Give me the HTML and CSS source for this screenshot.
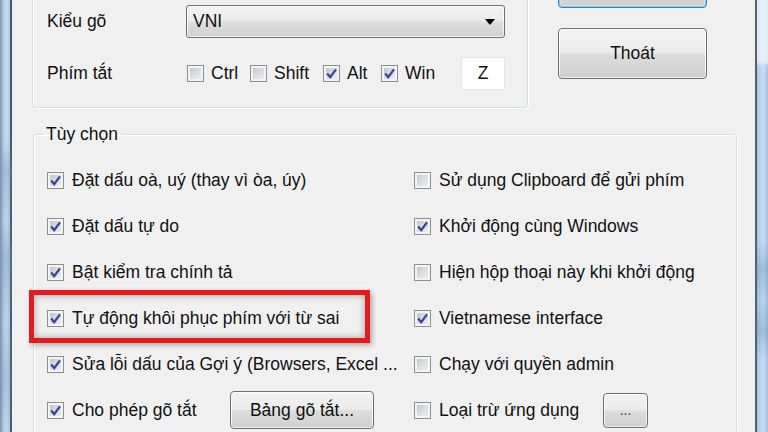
FILE: index.html
```html
<!DOCTYPE html>
<html lang="vi">
<head>
<meta charset="utf-8">
<title>UniKey</title>
<link rel="stylesheet" href="styles.css">
</head>
<body>
<div class="window">
  <div class="frame-left"></div>
  <div class="client">
    <div class="top">
      <div class="group main-group">
        <div class="field-row">
          <span class="field-label">Kiểu gõ</span>
          <div class="combo"><span class="combo-text">VNI</span><span class="combo-arrow"></span></div>
        </div>
        <div class="field-row hotkey-row">
          <span class="field-label">Phím tắt</span>
          <label class="check hk hk-ctrl"><span class="box"></span><span class="txt">Ctrl</span></label>
          <label class="check hk hk-shift"><span class="box"></span><span class="txt">Shift</span></label>
          <label class="check hk hk-alt"><span class="box on"><svg viewBox="0 0 15 15"><path d="M3.2 7.6 L6.2 11.2 L12 3.4" /></svg></span><span class="txt">Alt</span></label>
          <label class="check hk hk-win"><span class="box on"><svg viewBox="0 0 15 15"><path d="M3.2 7.6 L6.2 11.2 L12 3.4" /></svg></span><span class="txt">Win</span></label>
          <div class="keybox">Z</div>
        </div>
      </div>
      <div class="actions">
        <button class="btn btn-default" type="button"></button>
        <button class="btn" type="button">Thoát</button>
      </div>
    </div>

    <fieldset class="options">
      <legend>Tùy chọn</legend>
      <div class="opt-grid">
        <div class="cell"><label class="check opt"><span class="box on"><svg viewBox="0 0 15 15"><path d="M3.2 7.6 L6.2 11.2 L12 3.4" /></svg></span><span class="txt">Đặt dấu oà, uý (thay vì òa, úy)</span></label></div>
        <div class="cell"><label class="check opt"><span class="box"></span><span class="txt">Sử dụng Clipboard để gửi phím</span></label></div>

        <div class="cell"><label class="check opt"><span class="box on"><svg viewBox="0 0 15 15"><path d="M3.2 7.6 L6.2 11.2 L12 3.4" /></svg></span><span class="txt">Đặt dấu tự do</span></label></div>
        <div class="cell"><label class="check opt"><span class="box on"><svg viewBox="0 0 15 15"><path d="M3.2 7.6 L6.2 11.2 L12 3.4" /></svg></span><span class="txt">Khởi động cùng Windows</span></label></div>

        <div class="cell"><label class="check opt"><span class="box on"><svg viewBox="0 0 15 15"><path d="M3.2 7.6 L6.2 11.2 L12 3.4" /></svg></span><span class="txt">Bật kiểm tra chính tả</span></label></div>
        <div class="cell"><label class="check opt"><span class="box"></span><span class="txt">Hiện hộp thoại này khi khởi động</span></label></div>

        <div class="cell highlighted">
          <label class="check opt"><span class="box on"><svg viewBox="0 0 15 15"><path d="M3.2 7.6 L6.2 11.2 L12 3.4" /></svg></span><span class="txt">Tự động khôi phục phím với từ sai</span></label>
          <span class="callout"></span>
        </div>
        <div class="cell"><label class="check opt"><span class="box on"><svg viewBox="0 0 15 15"><path d="M3.2 7.6 L6.2 11.2 L12 3.4" /></svg></span><span class="txt">Vietnamese interface</span></label></div>

        <div class="cell"><label class="check opt"><span class="box on"><svg viewBox="0 0 15 15"><path d="M3.2 7.6 L6.2 11.2 L12 3.4" /></svg></span><span class="txt">Sửa lỗi dấu của Gợi ý (Browsers, Excel ...</span></label></div>
        <div class="cell"><label class="check opt"><span class="box"></span><span class="txt">Chạy với quyền admin</span></label></div>

        <div class="cell"><label class="check opt fixed-left"><span class="box on"><svg viewBox="0 0 15 15"><path d="M3.2 7.6 L6.2 11.2 L12 3.4" /></svg></span><span class="txt">Cho phép gõ tắt</span></label><button class="btn btn-table" type="button">Bảng gõ tắt...</button></div>
        <div class="cell"><label class="check opt fixed-right"><span class="box"></span><span class="txt">Loại trừ ứng dụng</span></label><button class="btn btn-more" type="button">...</button></div>
      </div>
    </fieldset>
  </div>
  <div class="frame-right"></div>
</div>
</body>
</html>
```

FILE: styles.css
```css
* { box-sizing: border-box; }

html, body {
  margin: 0;
  padding: 0;
}

body {
  width: 768px;
  height: 432px;
  overflow: hidden;
  background: #f0f0f0;
  font-family: "Liberation Sans", Arial, sans-serif;
  font-size: 17.5px;
  color: #111;
}

.window {
  display: flex;
  width: 768px;
  height: 432px;
  overflow: hidden;
}

.frame-left {
  flex: none;
  width: 12px;
  background:
    linear-gradient(to bottom, rgba(120,145,175,0) 0, rgba(120,145,175,0) 140px, rgba(110,140,175,.35) 170px, rgba(120,145,175,.1) 220px, rgba(110,140,175,.4) 260px, rgba(120,145,175,.1) 320px, rgba(110,140,175,.3) 380px, rgba(120,145,175,.05) 432px),
    linear-gradient(to right, #7d92a8 0, #9db3c9 2px, #b9d3ee 4px, #c6dcf3 7px, #a9c5e3 10px, #4a5766 10px, #4a5766 12px);
}

.frame-right {
  flex: none;
  width: 13px;
  background:
    linear-gradient(to right, #56636f 0, #56636f 2px, transparent 2px),
    linear-gradient(to bottom, rgba(240,246,252,.75) 0, rgba(240,246,252,.75) 60px, rgba(240,246,252,0) 68px),
    linear-gradient(to bottom, rgba(100,130,170,0) 0, rgba(100,130,170,0) 240px, rgba(100,130,170,.35) 270px, rgba(100,130,170,.1) 300px, rgba(100,130,170,.35) 330px, rgba(100,130,170,0) 360px),
    linear-gradient(to right, #9fbfe2 2px, #bcd7f2 5px, #c6ddf4 9px, #a3c1e0 13px);
}

.client {
  flex: 1;
  min-width: 0;
}

.top {
  display: flex;
  align-items: flex-start;
}

/* group boxes */
.group {
  border: 1px solid #d5dfe5;
  border-radius: 3px;
  box-shadow: inset 1px 1px 0 #fff, 1px 1px 0 #fff;
}

.main-group {
  margin-top: -30px;
  margin-left: 20px;
  width: 496px;
  height: 138px;
  padding: 34px 0 0 14px;
}

.field-row {
  display: flex;
  align-items: center;
  height: 33px;
}

.hotkey-row {
  margin-top: 19px;
}

.field-label {
  flex: none;
  width: 139px;
}

.hotkey-row .field-label {
  width: 140px;
}

.combo {
  flex: none;
  width: 319px;
  height: 33px;
  display: flex;
  align-items: center;
  justify-content: space-between;
  padding: 0 9px 0 6px;
  border: 1px solid #707070;
  border-radius: 3px;
  background: linear-gradient(to bottom, #f3f3f3 0, #ebebeb 48%, #dedede 52%, #cfcfcf 100%);
  box-shadow: inset 0 0 0 1px rgba(255,255,255,.75);
}

.combo-arrow {
  width: 0;
  height: 0;
  border-left: 5px solid transparent;
  border-right: 5px solid transparent;
  border-top: 6px solid #000;
}

/* checkboxes */
.check {
  display: flex;
  align-items: center;
  white-space: nowrap;
}

.box {
  flex: none;
  width: 17px;
  height: 17px;
  border: 1px solid #8e8f8f;
  background: linear-gradient(135deg, #b7bcc2 0, #d9dbde 45%, #f1f1f2 100%);
  box-shadow: inset 0 0 0 2px #f4f4f4;
  display: flex;
  align-items: center;
  justify-content: center;
}

.box svg {
  width: 15px;
  height: 15px;
  display: block;
}

.box svg path {
  fill: none;
  stroke: #3346a0;
  stroke-width: 2.3;
}

.hk .txt { margin-left: 7px; }
.hk-ctrl { width: 63px; }
.hk-shift { width: 73px; }
.hk-alt { width: 58px; }
.hk-win { width: 80px; }

.keybox {
  flex: none;
  width: 44px;
  height: 33px;
  background: #fff;
  border: 1px solid #e1e6eb;
  display: flex;
  align-items: center;
  justify-content: center;
}

/* buttons */
.actions {
  margin-top: -43px;
  margin-left: 30px;
  display: flex;
  flex-direction: column;
  gap: 20px;
}

.btn {
  width: 149px;
  height: 51px;
  padding: 0;
  font: inherit;
  color: #111;
  border: 1px solid #707070;
  border-radius: 4px;
  background: linear-gradient(to bottom, #f3f3f3 0, #ebebeb 48%, #dddddd 52%, #cfcfcf 100%);
  box-shadow: inset 0 0 0 1px rgba(255,255,255,.7);
}

.btn-default {
  border-color: #3c7fb1;
  box-shadow: inset 0 0 0 1px #7fd0f3, inset 0 0 0 2px rgba(200,236,250,.6);
}

/* options group */
.options {
  margin: 16px 0 0 21px;
  width: 704px;
  min-width: 0;
  padding: 13px 0 0 13px;
  border: 1px solid #d5dfe5;
  border-radius: 3px;
  box-shadow: inset 1px 1px 0 #fff, 1px 1px 0 #fff;
}

.options legend {
  margin-left: -4px;
  padding: 0 3px;
  line-height: 20px;
}

.opt-grid {
  display: grid;
  grid-template-columns: 367px 1fr;
  grid-auto-rows: 46px;
}

.cell {
  display: flex;
  align-items: center;
}

.opt .txt { margin-left: 8px; }

.fixed-left { width: 183px; flex: none; }
.fixed-right { width: 189px; flex: none; }

.btn-table {
  width: 144px;
  height: 38px;
}

.btn-more {
  width: 45px;
  height: 35px;
  font-size: 14px;
  color: #333;
}

/* annotation over the highlighted option */
.highlighted {
  position: relative;
}

.callout {
  position: absolute;
  left: -18px;
  top: -5px;
  width: 341px;
  height: 53px;
  border: 5px solid #e41a1c;
  box-shadow: inset 0 0 7px rgba(0,0,0,.35), 2px 2px 5px rgba(0,0,0,.3);
  pointer-events: none;
}
```
